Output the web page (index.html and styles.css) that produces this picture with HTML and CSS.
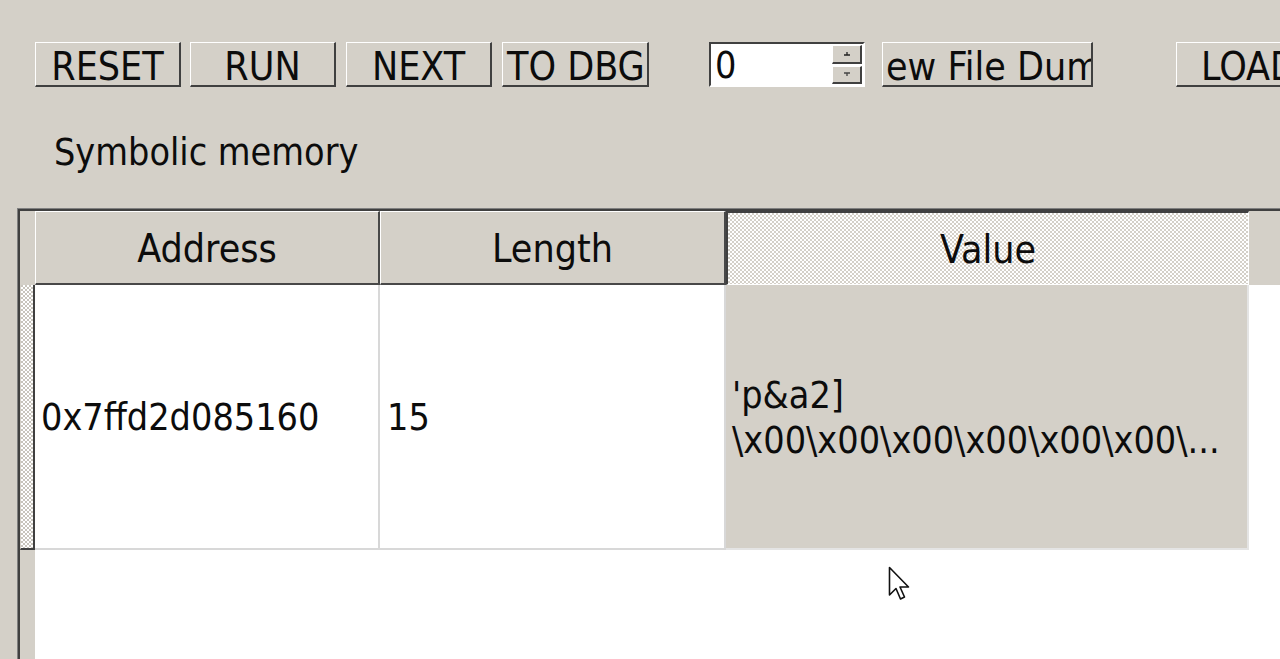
FILE: index.html
```html
<!DOCTYPE html>
<html>
<head>
<meta charset="utf-8">
<link rel="stylesheet" href="styles.css">
</head>
<body>
<div class="toolbar">
  <button class="btn w146">RESET</button>
  <button class="btn w146 g9">RUN</button>
  <button class="btn w146 g10">NEXT</button>
  <button class="btn w147 g10 tight">TO DBG</button>
  <div class="spin g60">
    <span class="spin-val">0</span>
    <div class="spin-btns">
      <div class="spin-b"><svg width="8" height="6" viewBox="0 0 8 6"><path d="M4 1 L4 4 M1 4 L7 4" stroke="#222" stroke-width="1.3"/></svg></div>
      <div class="spin-b"><svg width="8" height="6" viewBox="0 0 8 6"><path d="M1 2 L7 2 M4 2 L4 5" stroke="#444" stroke-width="1.3"/></svg></div>
    </div>
  </div>
  <button class="btn w211 g17 clip">ew File Dum</button>
  <button class="btn w146 g83 load">LOAD</button>
</div>

<div class="label">Symbolic memory</div>

<div class="frame">
  <div class="view">
    <div class="head-row">
      <div class="corner"></div>
      <div class="hcell c-addr">Address</div>
      <div class="hcell c-len">Length</div>
      <div class="hcell c-val selected">Value</div>
      <div class="hfill"></div>
    </div>
    <div class="data-row">
      <div class="rowhead"></div>
      <div class="cell c-addr">0x7ffd2d085160</div>
      <div class="cell c-len">15</div>
      <div class="cell c-val sel">'p&amp;a2]<br>\x00\x00\x00\x00\x00\x00\...</div>
      <div class="dfill"></div>
    </div>
    <div class="rest">
      <div class="rest-head"></div>
      <div class="rest-body"></div>
    </div>
  </div>
</div>

<svg class="cursor" width="22" height="36" viewBox="0 0 22 36"><path d="M1.5 1.5 L1.5 29 L8 22.5 L12.5 33 L16.5 31 L12 21 L20.5 21 Z" fill="#fff" stroke="#111" stroke-width="1.6" stroke-linejoin="round"/></svg>
</body>
</html>
```

FILE: styles.css
```css
html, body {
  margin: 0;
  padding: 0;
  background: #d4d0c8;
  overflow: hidden;
  width: 1280px;
  height: 659px;
}
body {
  font-family: "DejaVu Sans Condensed", "DejaVu Sans", sans-serif;
  font-stretch: condensed;
  font-size: 37.4px;
  color: #0c0c0c;
  position: relative;
}

.toolbar {
  display: flex;
  padding: 42px 0 0 35px;
  height: 45px;
  white-space: nowrap;
  overflow: hidden;
}
.btn {
  font: inherit;
  font-stretch: condensed;
  font-size: 39px;
  color: #0c0c0c;
  box-sizing: border-box;
  height: 45px;
  background: #d4d0c8;
  border-top: 1px solid #ffffff;
  border-left: 1px solid #ffffff;
  border-right: 2px solid #404040;
  border-bottom: 2px solid #404040;
  padding: 4px 0 0 0;
  margin: 0;
  display: flex;
  align-items: center;
  justify-content: center;
  overflow: hidden;
  flex: none;
  line-height: 1;
}
.w146 { width: 146px; }
.w147 { width: 147px; }
.w211 { width: 211px; }
.g9 { margin-left: 9px; }
.g10 { margin-left: 10px; }
.g17 { margin-left: 17px; }
.g60 { margin-left: 60px; }
.g83 { margin-left: 83px; }
.tight { justify-content: flex-start; padding-left: 4px; }
.clip { justify-content: flex-start; padding-left: 3px; }
.load { justify-content: flex-start; padding-left: 24px; }

.spin {
  flex: none;
  box-sizing: border-box;
  width: 156px;
  height: 45px;
  background: #fff;
  border-top: 2px solid #404040;
  border-left: 2px solid #404040;
  border-right: 2px solid #ffffff;
  border-bottom: 2px solid #ffffff;
  display: flex;
  align-items: stretch;
  padding: 1px 1px 1px 0;
}
.spin-val {
  flex: 1;
  display: flex;
  align-items: center;
  padding: 3px 0 0 4px;
  line-height: 1;
}
.spin-btns {
  width: 30px;
  display: flex;
  flex-direction: column;
  gap: 2px;
}
.spin-b {
  flex: 1;
  box-sizing: border-box;
  background: #d4d0c8;
  border-top: 1px solid #fff;
  border-left: 1px solid #fff;
  border-right: 2px solid #404040;
  border-bottom: 2px solid #404040;
  display: flex;
  align-items: center;
  justify-content: center;
}

.label {
  margin-top: 42px;
  padding-left: 54px;
  height: 46px;
  line-height: 46px;
}

.frame {
  margin-top: 33px;
  margin-left: 17px;
  border-top: 1px solid #808080;
  border-left: 1px solid #808080;
  height: 450px;
}
.view {
  box-sizing: border-box;
  border-top: 2px solid #404040;
  border-left: 2px solid #404040;
  height: 100%;
  display: flex;
  flex-direction: column;
  background: #fff;
}

.head-row {
  display: flex;
  height: 74px;
  flex: none;
  background: #d4d0c8;
}
.corner {
  width: 15px;
  flex: none;
}
.hcell {
  box-sizing: border-box;
  flex: none;
  border-top: 1px solid #fff;
  border-left: 1px solid #fff;
  border-right: 2px solid #484848;
  border-bottom: 2px solid #484848;
  display: flex;
  align-items: center;
  justify-content: center;
  line-height: 1;
  padding-top: 2px;
  font-size: 39px;
}
.c-addr { width: 345px; }
.c-len { width: 346px; }
.c-val { width: 523px; }
.hcell.selected {
  border-top: 2px solid #404040;
  border-left: 2px solid #404040;
  border-right: 1px solid #fff;
  border-bottom: 1px solid #fff;
  background: repeating-conic-gradient(#ffffff 0 25%, #d4d0c8 0 50%) 0 0 / 4px 4px;
}
.hfill { flex: 1; }

.data-row {
  display: flex;
  height: 265px;
  flex: none;
}
.rowhead {
  width: 15px;
  flex: none;
  box-sizing: border-box;
  border-left: 1px solid #d4d0c8;
  border-right: 2px solid #404040;
  border-bottom: 2px solid #404040;
  background: repeating-conic-gradient(#ffffff 0 25%, #c8c4bc 0 50%) 0 0 / 4px 4px;
}
.cell {
  box-sizing: border-box;
  flex: none;
  border-right: 2px solid #d8d8d8;
  border-bottom: 2px solid #d8d8d8;
  display: flex;
  align-items: center;
  padding-left: 6px;
  padding-top: 2px;
  line-height: 45px;
  font-size: 37.4px;
  background: #fff;
}
.cell.c-len { padding-left: 7px; }
.cell.sel {
  background: #d4d0c8;
  border-right: 2px solid #e4e4e4;
  border-bottom: 2px solid #e4e4e4;
  padding-left: 6px;
}
.dfill { flex: 1; }

.rest {
  flex: 1;
  display: flex;
}
.rest-head {
  width: 15px;
  flex: none;
  background: #d4d0c8;
}
.rest-body { flex: 1; }

.cursor {
  position: absolute;
  left: 888px;
  top: 566px;
}
```
